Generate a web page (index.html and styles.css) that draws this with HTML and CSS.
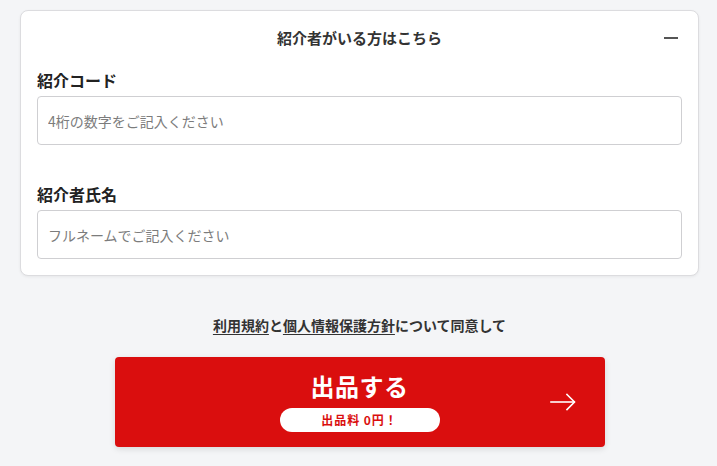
FILE: index.html
```html
<!DOCTYPE html>
<html lang="ja">
<head>
<meta charset="utf-8">
<link rel="stylesheet" href="styles.css">
</head>
<body>
<main class="page">
  <section class="card">
    <div class="card-head">
      <span></span>
      <h2 class="card-title">紹介者がいる方はこちら</h2>
      <span class="minus"></span>
    </div>
    <div class="field">
      <label class="label">紹介コード</label>
      <input class="input" type="text" placeholder="4桁の数字をご記入ください">
    </div>
    <div class="field field-second">
      <label class="label">紹介者氏名</label>
      <input class="input" type="text" placeholder="フルネームでご記入ください">
    </div>
  </section>
  <p class="agree"><a class="link" href="#">利用規約</a>と<a class="link" href="#">個人情報保護方針</a>について同意して</p>
  <div class="submit-wrap">
    <button class="submit" type="button">
      <span class="submit-title">出品する</span>
      <span class="pill">出品料 0円！</span>
      <svg class="arrow" width="26" height="18" viewBox="0 0 26 18" fill="none" stroke="#fff" stroke-width="1.6" stroke-linecap="square">
        <path d="M1 9 H24"/>
        <path d="M17 1.5 L24.5 9 L17 16.5"/>
      </svg>
    </button>
  </div>
</main>
</body>
</html>
```
FILE: styles.css
```css
* { box-sizing: border-box; }
html, body { margin: 0; padding: 0; }
body {
  background: #f4f5f7;
  font-family: "Noto Sans CJK JP", "Noto Sans", sans-serif;
  color: #222;
  width: 717px;
  height: 466px;
  overflow: hidden;
}
.page {
  padding: 10px 18px 0 20px;
}
.card {
  background: #fff;
  border: 1px solid #dcdcdf;
  border-radius: 8px;
  box-shadow: 0 1px 3px rgba(0,0,0,0.06);
  padding: 16px 16px 16px;
}
.card-head {
  display: grid;
  grid-template-columns: 1fr auto 1fr;
  align-items: center;
  height: 22px;
  margin-bottom: 19px;
}
.card-title {
  margin: 0;
  font-size: 15px;
  line-height: 22px;
  font-weight: 700;
  color: #333;
}
.minus {
  justify-self: end;
  width: 14px;
  height: 2px;
  background: #555;
  margin-right: 4px;
  margin-top: -1px;
}
.field {
  display: flex;
  flex-direction: column;
}
.field-second { margin-top: 37px; }
.label {
  font-size: 16px;
  line-height: 24px;
  font-weight: 700;
  color: #222;
  margin-bottom: 4px;
}
.input {
  height: 49px;
  border: 1px solid #cfcfd2;
  border-radius: 4px;
  padding: 0 10px;
  font-family: "Noto Sans CJK JP", "Noto Sans", sans-serif;
  font-size: 14px;
  color: #333;
  background: #fff;
  outline: none;
}
.input::placeholder { color: #7c7c7c; }
.agree {
  margin: 39px 0 0;
  text-align: center;
  font-size: 14px;
  line-height: 20px;
  font-weight: 700;
  color: #333;
}
.link {
  color: #333;
  text-decoration: underline;
  text-decoration-thickness: 1px;
  text-underline-offset: 3px;
}
.submit-wrap {
  display: flex;
  justify-content: center;
  margin-top: 22px;
}
.submit {
  position: relative;
  width: 490px;
  height: 90px;
  border: none;
  border-radius: 4px;
  background: #da0e0e;
  box-shadow: 0 2px 6px rgba(0,0,0,0.12);
  display: flex;
  flex-direction: column;
  align-items: center;
  padding: 14px 0 0;
  font-family: "Noto Sans CJK JP", "Noto Sans", sans-serif;
  cursor: pointer;
}
.submit-title {
  color: #fff;
  font-size: 24px;
  line-height: 30px;
  font-weight: 700;
  letter-spacing: 0.02em;
}
.pill {
  margin-top: 7px;
  width: 160px;
  height: 24px;
  border-radius: 12px;
  background: #fff;
  color: #da0e0e;
  font-size: 12px;
  line-height: 24px;
  font-weight: 700;
  letter-spacing: 0.08em;
  text-align: center;
}
.arrow {
  position: absolute;
  right: 29px;
  top: 36px;
}
```
